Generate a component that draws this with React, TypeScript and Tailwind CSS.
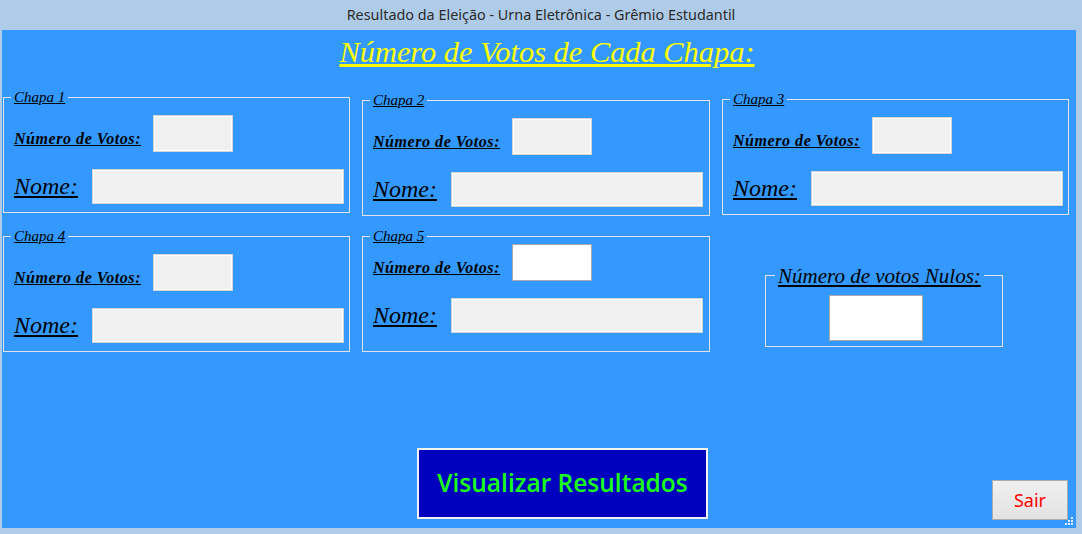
import React from 'react';

const serif = { fontFamily: '"Liberation Serif", "DejaVu Serif", serif' };

type BoxProps = {
  title: string;
  className: string;
  enabled?: boolean;
};

const ReadBox: React.FC<{ className: string; white?: boolean }> = ({ className, white }) => (
  <div
    className={
      white
        ? `bg-white border border-[#a9a9a9] ${className}`
        : `bg-[#f0f0f0] border border-[#d4d4d4] shadow-[inset_0_0_0_1px_#ffffff] ${className}`
    }
  />
);

const ChapaBox: React.FC<BoxProps> = ({ title, className, enabled }) => (
  <div className={`relative border border-[#e4e4e4] h-[116px] ${className}`}>
    <span
      className="absolute -top-[9px] left-[7px] bg-[#3399ff] px-[3px] text-[15px] italic underline text-black leading-[17px]"
      style={serif}
    >
      {title}
    </span>
    <div className={`flex items-center pl-[10px] ${enabled ? 'pt-[7px]' : 'pt-[17px]'}`}>
      <span
        className="w-[139px] text-[16px] font-bold italic underline text-black mt-[10px] tracking-[0.55px]"
        style={serif}
      >
        Número de Votos:
      </span>
      <ReadBox className="w-[80px] h-[37px]" white={enabled} />
    </div>
    <div className="flex items-center pl-[10px] mt-[16px]">
      <span className="w-[78px] text-[24px] italic underline text-black" style={serif}>
        Nome:
      </span>
      <ReadBox className="w-[252px] h-[35px]" />
    </div>
  </div>
);

export default function App() {
  return (
    <div className="relative w-[1082px] h-[534px] bg-[#aecbe8] flex flex-col overflow-hidden">
      <div
        className="h-[30px] flex items-center justify-center text-[14.4px] text-[#2b2b2b]"
        style={{ fontFamily: '"Noto Sans", "Open Sans", sans-serif' }}
      >
        Resultado da Eleição - Urna Eletrônica - Grêmio Estudantil
      </div>

      <div className="ml-[2px] mr-[6px] mb-[6px] flex-1 bg-[#3399ff] flex flex-col">
        <div className="h-[67px] pt-[5px] flex justify-center">
          <span
            className="text-[30.4px] italic underline text-[#ffff00] leading-[34px] ml-[16px]"
            style={serif}
          >
            Número de Votos de Cada Chapa:
          </span>
        </div>

        <div className="flex items-start">
          <ChapaBox title="Chapa 1" className="w-[347px] ml-[1px]" />
          <ChapaBox title="Chapa 2" className="w-[348px] ml-[12px] mt-[3px]" />
          <ChapaBox title="Chapa 3" className="w-[347px] ml-[12px] mt-[2px]" />
        </div>

        <div className="flex items-start mt-[20px]">
          <ChapaBox title="Chapa 4" className="w-[347px] ml-[1px]" />
          <ChapaBox title="Chapa 5" className="w-[348px] ml-[12px]" enabled />
          <div className="relative ml-[55px] mt-[39px] w-[238px] h-[72px] border border-[#e4e4e4] flex justify-center">
            <span
              className="absolute -top-[12px] left-[9px] bg-[#3399ff] px-[3px] text-[21px] italic underline text-black leading-[24px]"
              style={serif}
            >
              Número de votos Nulos:
            </span>
            <ReadBox className="w-[94px] h-[46px] mt-[19px] -ml-[17px]" white />
          </div>
        </div>

        <div className="flex items-end mt-auto mb-[8px]">
          <button
            className="ml-[415px] mb-[1px] w-[291px] h-[71px] bg-[#0000bf] border-2 border-[#f2f2f2] text-[#19ff19] text-[24.5px] font-semibold"
            style={{ fontFamily: '"Open Sans", "Noto Sans", sans-serif' }}
          >
            Visualizar Resultados
          </button>
          <button
            className="ml-auto mr-[8px] w-[76px] h-[40px] bg-gradient-to-b from-[#f0f0f0] to-[#e3e3e3] border border-[#adadad] text-[#ff0000] text-[18px]"
            style={{ fontFamily: '"Noto Sans", "Open Sans", sans-serif' }}
          >
            Sair
          </button>
        </div>
      </div>

      <svg className="absolute right-[8px] bottom-[8px]" width="9" height="9" viewBox="0 0 9 9">
        <g fill="#ffffff" opacity="0.85">
          <rect x="6" y="0" width="2" height="2" />
          <rect x="3" y="3" width="2" height="2" />
          <rect x="6" y="3" width="2" height="2" />
          <rect x="0" y="6" width="2" height="2" />
          <rect x="3" y="6" width="2" height="2" />
          <rect x="6" y="6" width="2" height="2" />
        </g>
      </svg>
    </div>
  );
}
